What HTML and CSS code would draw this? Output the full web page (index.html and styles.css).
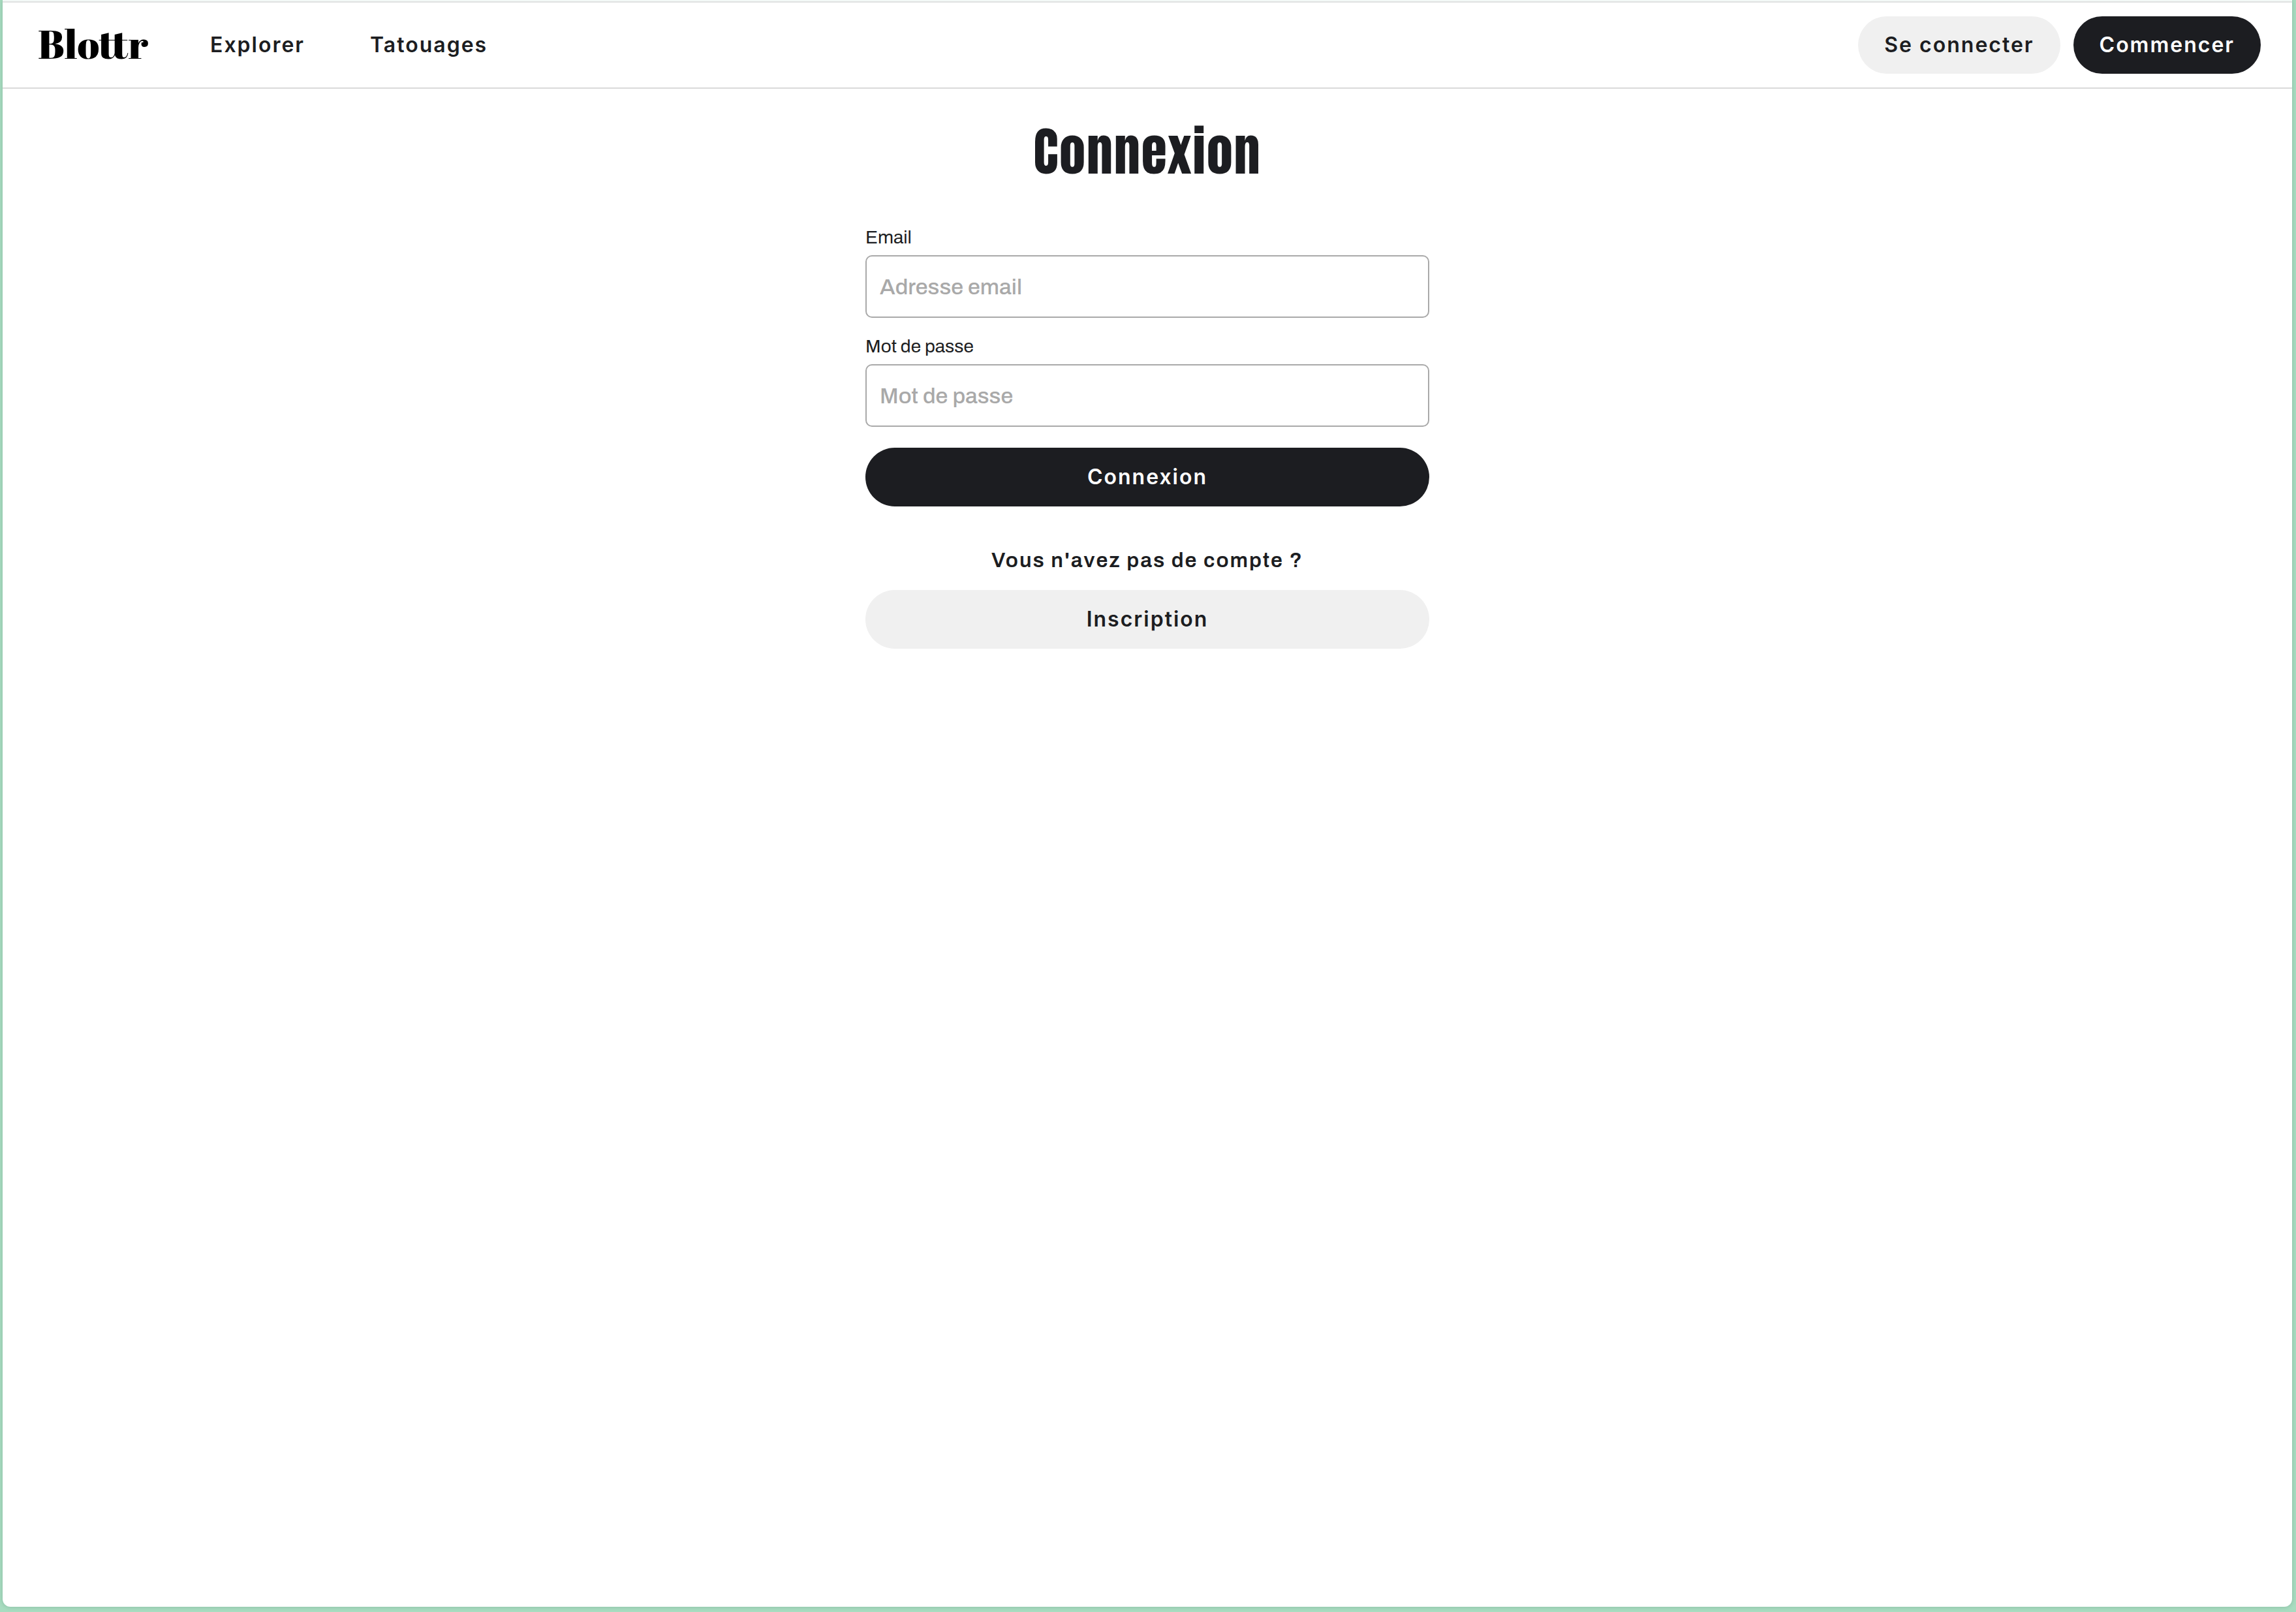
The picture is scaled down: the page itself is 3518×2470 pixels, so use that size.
FILE: index.html
```html
<!DOCTYPE html>
<html lang="fr">
<head>
<meta charset="utf-8">
<meta name="viewport" content="width=device-width, initial-scale=1">
<title>Connexion – Blottr</title>
<link rel="stylesheet" href="styles.css">
</head>
<body>
<div class="window">
  <header class="header">
    <a class="logo" href="#">Blottr</a>
    <nav class="nav">
      <a class="nav-link" href="#">Explorer</a>
      <a class="nav-link" href="#">Tatouages</a>
    </nav>
    <div class="actions">
      <button class="button button-light" type="button">Se connecter</button>
      <button class="button button-dark" type="button">Commencer</button>
    </div>
  </header>
  <main class="main">
    <h1 class="title">Connexion</h1>
    <form class="form">
      <div class="field">
        <label class="label" for="email">Email</label>
        <input class="input" id="email" type="email" placeholder="Adresse email">
      </div>
      <div class="field">
        <label class="label" for="password">Mot de passe</label>
        <input class="input" id="password" type="password" placeholder="Mot de passe">
      </div>
      <button class="button button-dark button-wide" type="submit">Connexion</button>
    </form>
    <section class="signup">
      <p class="question">Vous n'avez pas de compte ?</p>
      <button class="button button-light button-wide" type="button">Inscription</button>
    </section>
  </main>
</div>
</body>
</html>
```
FILE: styles.css
```css
*,
*::before,
*::after {
  box-sizing: border-box;
}

body {
  margin: 0;
  min-height: 100vh;
  display: flex;
  padding: 0 6px 8px 4px;
  background: #a8dcc0;
  color: #1c1d21;
  font-family: Archivo, "Liberation Sans", Arial, sans-serif;
}

.window {
  flex: 1;
  min-width: 0;
  border-top: 2px solid #f3f9f7;
  border-radius: 0 0 12px 12px;
  background: #fff;
  box-shadow: 0 0 6px rgba(40, 90, 70, 0.25);
}

.header {
  display: flex;
  align-items: center;
  height: 134px;
  padding: 0 48px 0 54px;
  border-top: 2px solid #dfe1e1;
  border-bottom: 2px solid #dadada;
}

.logo {
  width: 169px;
  padding-bottom: 6px;
  color: #000;
  font: 400 62px/80px "Abril Fatface", "Liberation Serif", serif;
  text-decoration: none;
}

.nav {
  display: flex;
  gap: 100px;
  margin-left: 95px;
}

.nav-link {
  color: inherit;
  font: 600 32px/40px Inter, sans-serif;
  letter-spacing: 2px;
  text-decoration: none;
}

.actions {
  display: flex;
  gap: 20px;
  margin-left: auto;
}

.button {
  height: 88px;
  padding: 0 40px;
  border: 0;
  border-radius: 45px;
  font: 600 32px/40px Inter, sans-serif;
  letter-spacing: 2px;
  cursor: pointer;
}

.button-light {
  background: #f0f0f0;
  color: #1c1d21;
}

.button-dark {
  background: #1c1d21;
  color: #fff;
}

.button-wide {
  width: 100%;
  height: 90px;
}

.main {
  width: 100%;
  max-width: 864px;
  margin: 0 auto;
  padding-top: 36px;
}

.title {
  margin: 0;
  font: 400 80px/120px Anton, "Liberation Sans Narrow", Impact, sans-serif;
  letter-spacing: 2px;
  text-align: center;
}

.form {
  margin-top: 55px;
}

.field {
  display: grid;
  gap: 10px;
  margin-bottom: 27px;
}

.field:last-of-type {
  margin-bottom: 32px;
}

.label {
  font-size: 28px;
  line-height: 34px;
}

.input {
  width: 100%;
  height: 96px;
  padding: 0 20px;
  border: 2px solid #a9a9a9;
  border-radius: 10px;
  background: #fff;
  color: inherit;
  font: 500 34px/40px Archivo, "Liberation Sans", Arial, sans-serif;
}

.input::placeholder {
  color: #a9a9a9;
}

.signup {
  margin-top: 63px;
}

.question {
  margin: 0 0 25px;
  font-size: 32px;
  font-weight: 600;
  line-height: 40px;
  letter-spacing: 2px;
  text-align: center;
}
```
